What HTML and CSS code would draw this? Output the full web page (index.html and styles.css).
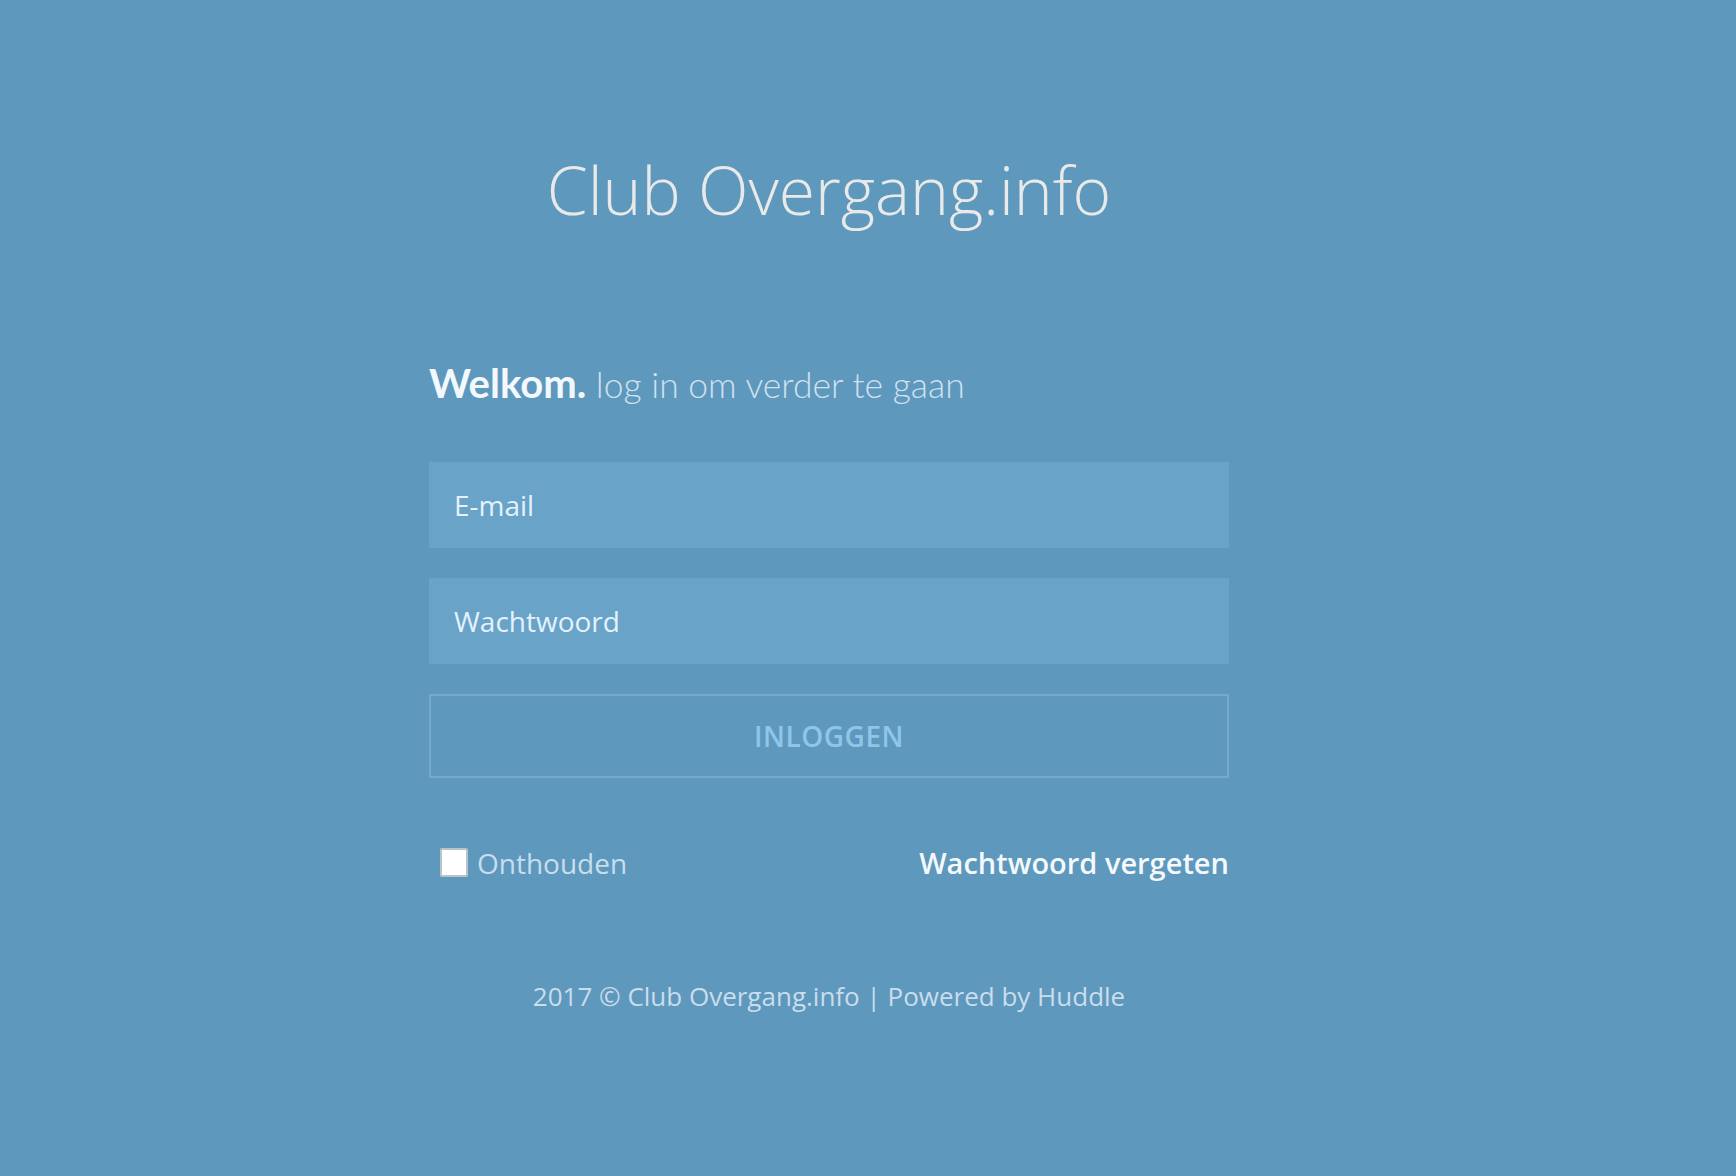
FILE: index.html
```html
<!DOCTYPE html>
<html lang="nl">
<head>
<meta charset="utf-8">
<title>Club Overgang.info</title>
<link rel="stylesheet" href="styles.css">
</head>
<body>
<main class="page">
  <h1 class="brand">Club Overgang.info</h1>
  <form class="login">
    <p class="welcome"><strong>Welkom.</strong> log in om verder te gaan</p>
    <input class="field" type="email" placeholder="E-mail">
    <input class="field" type="password" placeholder="Wachtwoord">
    <button class="submit" type="button">INLOGGEN</button>
    <div class="options">
      <label class="remember"><span class="box"></span>Onthouden</label>
      <a class="forgot" href="#">Wachtwoord vergeten</a>
    </div>
  </form>
  <footer class="foot">2017 © Club Overgang.info | Powered by Huddle</footer>
</main>
</body>
</html>
```
FILE: styles.css
```css
html, body {
  margin: 0;
  height: 100%;
}
body {
  background: #5e98bc;
  font-family: "Open Sans", "Liberation Sans", sans-serif;
}
.page {
  display: flex;
  flex-direction: column;
  align-items: center;
  padding-right: 78px;
  padding-top: 149px;
}
.brand {
  margin: 0;
  font-weight: 300;
  font-size: 66px;
  line-height: 80px;
  color: #e9e9e9;
}
.login {
  width: 800px;
  display: flex;
  flex-direction: column;
  margin-top: 130px;
}
.welcome {
  margin: 0 0 53px 0;
  font-family: Lato, "Open Sans", sans-serif;
  font-size: 35.5px;
  line-height: 48px;
  font-weight: 300;
  color: #cfe2f0;
}
.welcome strong {
  font-size: 40px;
  font-weight: 700;
  color: #f2f8fc;
}
.field {
  box-sizing: border-box;
  height: 86px;
  border: 0;
  margin: 0 0 30px 0;
  padding: 0 25px;
  background: #6aa3c8;
  font-family: "Open Sans", sans-serif;
  font-size: 28px;
  font-weight: 500;
  color: #e6f3fc;
  outline: none;
}
.field::placeholder {
  color: #e3f2fc;
}
.submit {
  box-sizing: border-box;
  height: 84px;
  border: 2px solid #72a9cd;
  background: transparent;
  font-family: "Open Sans", sans-serif;
  font-weight: 600;
  font-size: 28px;
  color: #8ec6e8;
  letter-spacing: 0.5px;
}
.options {
  display: flex;
  justify-content: space-between;
  align-items: center;
  margin-top: 65px;
  padding-left: 11px;
}
.remember {
  display: flex;
  align-items: center;
  font-size: 28px;
  color: #c7deee;
}
.box {
  box-sizing: border-box;
  width: 28px;
  height: 29px;
  background: #fff;
  border: 2px solid #b9c3ca;
  border-radius: 2px;
  margin-right: 9px;
}
.forgot {
  font-size: 29px;
  font-weight: 600;
  color: #f3f9fd;
  text-decoration: none;
}
.foot {
  margin-top: 96px;
  font-size: 26px;
  color: #c9ddec;
}
```
